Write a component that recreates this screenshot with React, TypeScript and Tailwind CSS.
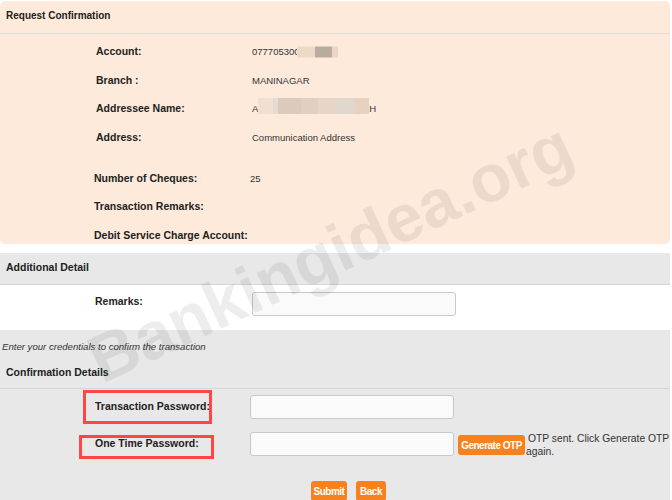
import React from 'react';

// Redaction blocks drawn over blurred values: [width, colour]
const accountBlur: [number, string][] = [
  [18, '#eddac6'],
  [17, '#b9ac9e'],
  [6, '#ecd5c2'],
];

const nameBlur: [number, string][] = [
  [15, '#efe0d2'],
  [5, '#e4dcd3'],
  [23, '#dccbbd'],
  [17, '#e0d0c2'],
  [19, '#e6d6c8'],
  [17, '#e0d8cc'],
  [15, '#e8d2bf'],
];

function InfoRow({ label, children, pl = 'pl-[96px]' }: { label: string; children?: React.ReactNode; pl?: string }) {
  return (
    <div className={`flex h-[28.5px] items-center ${pl}`}>
      <div className="w-[156px] shrink-0 text-[10.5px] font-bold text-[#222]">{label}</div>
      <div className="relative flex items-center text-[9.5px] text-[#333]">{children}</div>
    </div>
  );
}

function TextInput() {
  return <div className="h-[24px] w-[204px] shrink-0 rounded-[3px] border border-[#c9c9c9] bg-[#fafafa]" />;
}

function OrangeButton({ label, w }: { label: string; w: string }) {
  return (
    <button
      className={`flex h-[20px] ${w} items-center justify-center rounded-[3px] bg-[#f6821f] text-[10px] font-bold tracking-[-0.5px] text-white`}
    >
      {label}
    </button>
  );
}

export default function App() {
  return (
    <div className="relative h-[500px] w-[672px] overflow-hidden bg-white font-['Liberation_Sans',Arial,sans-serif] text-[#222]">
      <div className="w-[670px]">
        {/* Request Confirmation */}
        <section className="mt-px h-[243px] overflow-hidden rounded-[5px] bg-[#fdeadb]">
          <div className="flex h-[33px] items-center border-b border-[#e0dcd8] px-[6px] pb-[3px] text-[10px] font-bold">
            Request Confirmation
          </div>
          <div className="pt-[4px]">
            <InfoRow label="Account:">
              <span>077705300</span>
              <div className="absolute left-[45px] top-1/2 flex h-[11px] -translate-y-1/2">
                {accountBlur.map(([w, c], i) => (
                  <span key={i} className="h-full" style={{ width: w, background: c }} />
                ))}
              </div>
            </InfoRow>
            <InfoRow label="Branch :">
              <span>MANINAGAR</span>
            </InfoRow>
            <InfoRow label="Addressee Name:">
              <span>A</span>
              <div className="flex h-[16px] -translate-y-[3px]">
                {nameBlur.map(([w, c], i) => (
                  <span key={i} className="h-full" style={{ width: w, background: c }} />
                ))}
              </div>
              <span>H</span>
            </InfoRow>
            <InfoRow label="Address:">
              <span>Communication Address</span>
            </InfoRow>
          </div>
          <div className="mt-[12.5px]">
            <InfoRow label="Number of Cheques:" pl="pl-[94px]">
              <span>25</span>
            </InfoRow>
            <InfoRow label="Transaction Remarks:" pl="pl-[94px]" />
            <InfoRow label="Debit Service Charge Account:" pl="pl-[94px]" />
          </div>
        </section>

        <div className="h-[9px]" />

        {/* Additional Detail */}
        <div className="flex h-[32px] items-center border-b border-[#d6d6d6] bg-[#e8e8e8] px-[6px] pb-[2px] text-[10.5px] font-bold">
          Additional Detail
        </div>
        <div className="h-[45px] bg-white pt-[7px]">
          <div className="flex items-center pl-[95px]">
            <div className="w-[157px] shrink-0 -translate-y-[2px] text-[10.5px] font-bold">Remarks:</div>
            <TextInput />
          </div>
        </div>

        {/* Confirmation */}
        <div className="h-[170px] bg-[#e8e8e8]">
          <div className="pl-[2px] pt-[11px] text-[9.6px] italic leading-[12px] text-[#333]">
            Enter your credentials to confirm the transaction
          </div>
          <div className="flex h-[36px] items-center border-b border-[#d6d6d6] px-[6px] pt-[4px] text-[10.5px] font-bold">
            Confirmation Details
          </div>
          <div className="flex items-center pl-[95px] pt-[6px]">
            <div className="w-[155px] shrink-0 text-[10.5px] font-bold">Transaction Password:</div>
            <TextInput />
          </div>
          <div className="mt-[13px] flex items-start pl-[95px]">
            <div className="flex h-[24px] w-[155px] shrink-0 items-center text-[10.5px] font-bold">One Time Password:</div>
            <TextInput />
            <div className="ml-[4px] mt-[3px] shrink-0">
              <OrangeButton label="Generate OTP" w="w-[67px]" />
            </div>
            <div className="ml-[3px] shrink-0 whitespace-nowrap text-[10.3px] leading-[13px] text-[#333]">
              OTP sent. Click Generate OTP
              <br />
              <span className="-ml-[2px]">again.</span>
            </div>
          </div>
          <div className="mt-[23px] flex gap-[9px] pl-[311px]">
            <OrangeButton label="Submit" w="w-[36px]" />
            <OrangeButton label="Back" w="w-[30px]" />
          </div>
        </div>
      </div>

      {/* highlight boxes */}
      <div className="pointer-events-none absolute left-[83px] top-[390px] h-[34px] w-[129px] border-[3px] border-[#ff4646]" />
      <div className="pointer-events-none absolute left-[79px] top-[435px] h-[24px] w-[135px] border-[3px] border-[#ff4646]" />

      {/* watermark */}
      <div className="pointer-events-none absolute left-[330px] top-[252px] -translate-x-1/2 -translate-y-1/2 rotate-[-25deg] whitespace-nowrap text-[67px] font-bold leading-none text-black/[0.07]">
        Bankingidea.org
      </div>
    </div>
  );
}
